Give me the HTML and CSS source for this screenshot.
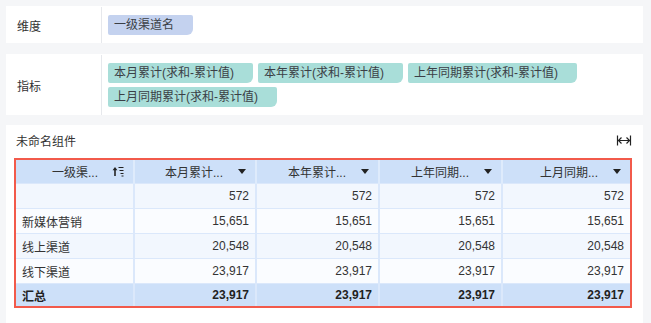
FILE: index.html
```html
<!DOCTYPE html>
<html lang="zh-CN">
<head>
  <meta charset="UTF-8">
  <title>未命名组件</title>
  <link rel="stylesheet" href="styles.css">
</head>
<body>
  <div class="panel field-row">
    <div class="field-label">维度</div>
    <div class="field-chips">
      <span class="chip dim">一级渠道名</span>
    </div>
  </div>

  <div class="panel field-row">
    <div class="field-label">指标</div>
    <div class="field-chips">
      <span class="chip metric">本月累计(求和-累计值)</span>
      <span class="chip metric">本年累计(求和-累计值)</span>
      <span class="chip metric">上年同期累计(求和-累计值)</span>
      <span class="chip metric">上月同期累计(求和-累计值)</span>
    </div>
  </div>

  <div class="panel widget">
    <div class="widget-head">
      <span class="widget-title">未命名组件</span>
      <svg class="fit-icon" width="16" height="11" viewBox="0 0 16 11">
        <path d="M1.5 0.5v10M14.5 0.5v10M2.5 5.5h11M5.5 2.5l-3 3 3 3M10.5 2.5l3 3-3 3" fill="none" stroke="#222" stroke-width="1.2"/>
      </svg>
    </div>

    <div class="table-frame">
      <table class="pivot">
        <colgroup>
          <col class="c1"><col class="c2"><col class="c3"><col class="c4"><col class="c5">
        </colgroup>
        <thead>
          <tr>
            <th><span class="th-inner"><span>一级渠...</span>
              <svg width="12" height="11" viewBox="0 0 12 11">
                <path d="M3 10V3" stroke="#222" stroke-width="1.6"/>
                <path d="M0.6 4.2L3 1 5.4 4.2z" fill="#222"/>
                <path d="M6.5 1.5h5M7.5 4.5h4M8.5 7.5h3M9.5 10h2" stroke="#222" stroke-width="1"/>
              </svg></span></th>
            <th><span class="th-inner"><span>本月累计...</span><i class="caret"></i></span></th>
            <th><span class="th-inner"><span>本年累计...</span><i class="caret"></i></span></th>
            <th><span class="th-inner"><span>上年同期...</span><i class="caret"></i></span></th>
            <th><span class="th-inner"><span>上月同期...</span><i class="caret"></i></span></th>
          </tr>
        </thead>
        <tbody>
          <tr class="odd"><td></td><td>572</td><td>572</td><td>572</td><td>572</td></tr>
          <tr class="even"><td>新媒体营销</td><td>15,651</td><td>15,651</td><td>15,651</td><td>15,651</td></tr>
          <tr class="odd"><td>线上渠道</td><td>20,548</td><td>20,548</td><td>20,548</td><td>20,548</td></tr>
          <tr class="even"><td>线下渠道</td><td>23,917</td><td>23,917</td><td>23,917</td><td>23,917</td></tr>
          <tr class="total"><td>汇总</td><td>23,917</td><td>23,917</td><td>23,917</td><td>23,917</td></tr>
        </tbody>
      </table>
    </div>
  </div>
</body>
</html>
```

FILE: styles.css
```css
body {
  margin: 0;
  padding: 6px 8px 0 6px;
  background: #f5f6f8;
  font-family: "Liberation Sans", "Noto Sans CJK SC", sans-serif;
  font-size: 12px;
  color: #333;
}

.panel {
  background: #fff;
}

.field-row {
  display: flex;
  margin-bottom: 11px;
}

.field-row + .field-row {
  margin-bottom: 10px;
}

.field-label {
  width: 84px;
  padding-left: 11px;
  display: flex;
  align-items: center;
  border-right: 1px solid #e6e8ec;
  margin: 1px 0 0;
}

.field-chips {
  flex: 1;
  display: flex;
  flex-wrap: wrap;
  gap: 4px 5px;
  padding: 9px 6px 8px;
}

.chip {
  height: 20px;
  line-height: 20px;
  padding: 0 19px 0 6px;
  border-radius: 2px 2px 6px 2px;
  color: #3b3f46;
  white-space: nowrap;
}

.chip.dim {
  background: #c4d2ef;
}

.chip.metric {
  background: #a9ded9;
}

.widget {
  padding: 6px 11px 16px 8px;
}

.widget-head {
  display: flex;
  justify-content: space-between;
  align-items: center;
  height: 18px;
  margin-bottom: 9px;
  padding-left: 2px;
}

.widget-title {
  color: #333;
}

.fit-icon {
  display: block;
  margin-top: 1px;
}

.table-frame {
  border: 2px solid #f25a4b;
}

.pivot {
  width: 100%;
  border-collapse: collapse;
  table-layout: fixed;
}

.pivot .c1 { width: 118px; }
.pivot .c2 { width: 122px; }
.pivot .c3 { width: 123px; }
.pivot .c4 { width: 123px; }

.pivot th {
  height: 23px;
  padding: 0 9px 0 6px;
  background: #cde0f9;
  font-weight: normal;
  color: #333;
  border-left: 2px solid #deebfc;
}

.pivot td {
  height: 24px;
  padding: 0 6px;
  text-align: right;
  border-left: 2px solid #dbe8fb;
  border-top: 1px solid #dbe8fb;
  white-space: nowrap;
}

.pivot th:first-child,
.pivot td:first-child {
  border-left: none;
}

.pivot td:first-child {
  text-align: left;
}

.th-inner {
  display: flex;
  justify-content: flex-end;
  align-items: center;
  gap: 15px;
}

.pivot th:first-child .th-inner {
  gap: 14px;
}

.caret {
  width: 0;
  height: 0;
  border-left: 4px solid transparent;
  border-right: 4px solid transparent;
  border-top: 5px solid #222;
}

.odd td {
  background: #f2f7fe;
}

.even td {
  background: #fafcff;
}

.total td {
  height: 22px;
  background: #cde0f9;
  font-weight: bold;
  color: #222;
  border-top: 1px solid #dbe8fb;
}
```
